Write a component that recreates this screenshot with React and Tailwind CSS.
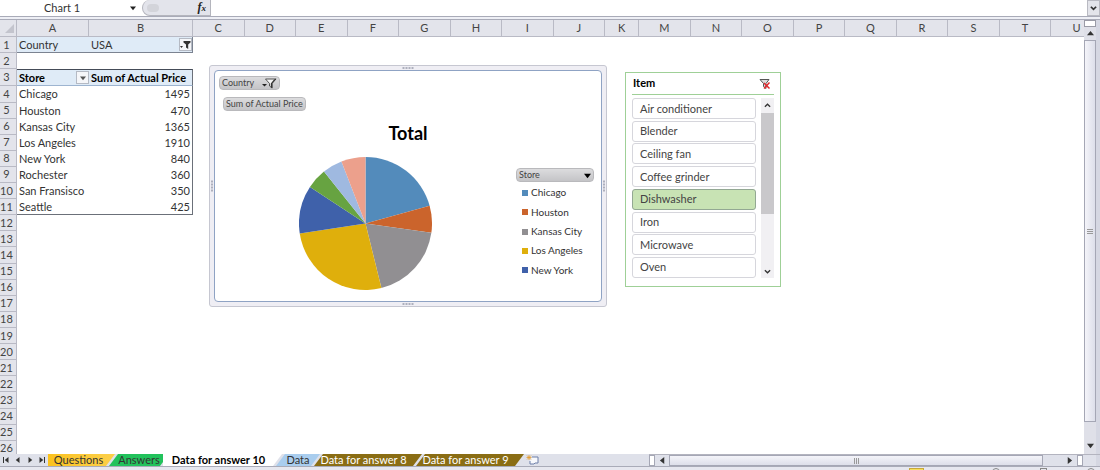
import React, { useState } from 'react';

const columns = ['C', 'D', 'E', 'F', 'G', 'H', 'I', 'J', 'K', 'M', 'N', 'O', 'P', 'Q', 'R', 'S', 'T', 'U'];

const stores = [
  { name: 'Chicago', total: 1495, color: '#538bbb' },
  { name: 'Houston', total: 470, color: '#cb642c' },
  { name: 'Kansas City', total: 1365, color: '#918f92' },
  { name: 'Los Angeles', total: 1910, color: '#dfaf0c' },
  { name: 'New York', total: 840, color: '#3f61aa' },
  { name: 'Rochester', total: 360, color: '#67a341' },
  { name: 'San Fransisco', total: 350, color: '#9fb9e0' },
  { name: 'Seattle', total: 425, color: '#eca08c' },
];

const items = ['Air conditioner', 'Blender', 'Ceiling fan', 'Coffee grinder', 'Dishwasher', 'Iron', 'Microwave', 'Oven'];

const rows = Array.from({ length: 26 }, (_, i) => i + 1);

function Triangle({ className, direction }) {
  const points = {
    down: '0,2 8,2 4,7',
    up: '0,6 8,6 4,1',
    left: '6,0 6,8 1,4',
    right: '2,0 2,8 7,4',
  };
  return (
    <svg viewBox="0 0 8 8" className={className} fill="currentColor" aria-hidden="true">
      <polygon points={points[direction]} />
    </svg>
  );
}

function Funnel({ className }) {
  return (
    <svg viewBox="0 0 15 11" className={className} aria-hidden="true">
      <path d="M0 6h5l-2.500 2.500z" fill="#222" />
      <path d="M3.500 1h10.500l-4 4.500v4.500l-2.500-2V5.500z" fill="#f4f4f4" stroke="#444" strokeWidth="0.900" />
      <path d="M14.500 0.600l-4.200 5v4.900L8.800 9V5.500L12 1.500z" fill="#333" />
    </svg>
  );
}

function SmallFunnel() {
  return (
    <svg viewBox="0 0 11 9" className="h-[9px] w-[11px]" fill="#333" aria-hidden="true">
      <path d="M0 6h3l-1.500 2z" />
      <path d="M3.500 1h7v1.500L8.200 4.500V9L6 7.500V4.500L3.500 2.500z" />
    </svg>
  );
}

function FormulaBar() {
  return (
    <div className="flex h-4 shrink-0 bg-white">
      <div className="flex w-[142px] items-center">
        <input
          aria-label="Name Box"
          defaultValue="Chart 1"
          className="w-[124px] bg-transparent text-center text-[11px] leading-4 text-[#333] outline-none"
        />
        <button aria-label="Open name list" className="flex w-5 justify-center text-[#222]">
          <Triangle direction="down" className="size-[6px]" />
        </button>
      </div>
      <div className="flex w-[69px] items-center justify-between rounded-l-full border-r border-b border-l border-[#b4b5bd] bg-[#e3e4eb] pr-1">
        <span className="ml-1 h-2 w-3 rounded-full bg-[#d3d4da]" />
        <button
          aria-label="Insert function"
          className="font-['Liberation_Serif',serif] text-[12px] leading-4 font-bold text-[#222] italic"
        >
          f<span className="text-[9px]">x</span>
        </button>
      </div>
      <input aria-label="Formula" className="min-w-0 flex-1 bg-white outline-none" />
      <button
        aria-label="Expand formula bar"
        className="flex w-[13px] items-center justify-center border border-[#b9bac2] bg-[#e3e4ea] text-[#333]"
      >
        <svg viewBox="0 0 8 8" className="size-[7px]" fill="none" stroke="currentColor" strokeWidth="2">
          <path d="M1 2l3 3 3-3" />
        </svg>
      </button>
    </div>
  );
}

function CellContent({ row }) {
  const store = stores[row - 4];

  if (row === 1) {
    return (
      <>
        <td className="border-b border-[#7b8391] bg-[#dfebf7] p-0 pl-[2px]">Country</td>
        <td className="border-r border-b border-[#7b8391] bg-[#dfebf7] p-0 pl-[2px]">
          <div className="flex items-center justify-between">
            USA
            <button aria-label="Filter country" className="flex h-[13px] w-[13px] items-center justify-center border border-[#b5bac4] bg-[#f5f6f9]">
              <SmallFunnel />
            </button>
          </div>
        </td>
      </>
    );
  }
  if (row === 3) {
    return (
      <>
        <th scope="col" className="border-t border-b border-t-[#444b57] border-b-[#9db4d0] bg-[#dfebf7] p-0 pl-[2px] text-left text-black">
          <div className="flex items-center justify-between">
            Store
            <button aria-label="Filter store" className="flex h-[13px] w-[13px] items-center justify-center border border-[#b5bac4] bg-[#f5f6f9] text-[#555]">
              <Triangle direction="down" className="size-[6px]" />
            </button>
          </div>
        </th>
        <th scope="col" className="border-t border-r border-b border-t-[#444b57] border-r-[#6b7079] border-b-[#9db4d0] bg-[#dfebf7] p-0 pl-[2px] text-left text-black">
          Sum of Actual Price
        </th>
      </>
    );
  }
  if (store && row < 11) {
    return (
      <>
        <td className="p-0 pl-[2px]">{store.name}</td>
        <td className="border-r border-[#6b7079] p-0 pr-[2px] text-right">{store.total}</td>
      </>
    );
  }
  if (store) {
    return (
      <>
        <td className="border-b border-[#6b7079] p-0 pl-[2px]">{store.name}</td>
        <td className="border-r border-b border-[#6b7079] p-0 pr-[2px] text-right">{store.total}</td>
      </>
    );
  }
  return (
    <>
      <td />
      <td />
    </>
  );
}

function Grid() {
  const head = 'border-r border-b border-[#b9bac5] bg-[#e3e4eb] p-0 text-center font-normal text-[#444]';

  return (
    <table className="h-[437px] w-[1103px] table-fixed border-separate border-spacing-0 text-[11px] leading-[14px] whitespace-nowrap text-[#333]">
      <colgroup>
        <col className="w-[17px]" />
        <col className="w-[72px]" />
        <col className="w-[104px]" />
        {columns.map((name) => (
          <col key={name} className={name === 'K' ? 'w-[34px]' : ''} />
        ))}
      </colgroup>
      <thead>
        <tr className="h-[17px]">
          <th className={head} aria-label="Select all">
            <svg viewBox="0 0 8 8" className="mr-[2px] ml-auto size-[9px]" fill="#c3c4cd">
              <polygon points="8,0 8,8 0,8" />
            </svg>
          </th>
          <th className={head}>A</th>
          <th className={head}>B</th>
          {columns.map((name) => (
            <th key={name} className={head}>{name}</th>
          ))}
        </tr>
      </thead>
      <tbody>
        {rows.map((row) => (
          <tr key={row}>
            <th scope="row" className={`${head} pr-[3px]`}>
              {row}
            </th>
            <CellContent row={row} />
            <td colSpan={columns.length} />
          </tr>
        ))}
      </tbody>
    </table>
  );
}

function Pie() {
  const sum = stores.reduce((acc, store) => acc + store.total, 0);
  let start = 0;

  const point = (share) => {
    const angle = share * Math.PI * 2;
    return `${100 + 100 * Math.sin(angle)} ${100 - 100 * Math.cos(angle)}`;
  };

  return (
    <svg viewBox="0 0 200 200" className="size-[133px]" role="img" aria-label="Total by store">
      {stores.map((store) => {
        const from = start;
        start += store.total / sum;
        return (
          <path key={store.name} d={`M100 100L${point(from)}A100 100 0 0 1 ${point(start)}Z`} fill={store.color} />
        );
      })}
    </svg>
  );
}

function Grip({ className }) {
  return (
    <span className={className}>
      <i className="size-[2px] bg-[#aeb0bd]" />
      <i className="size-[2px] bg-[#aeb0bd]" />
      <i className="size-[2px] bg-[#aeb0bd]" />
      <i className="size-[2px] bg-[#aeb0bd]" />
    </span>
  );
}

function PivotChart() {
  const pill = 'flex items-center rounded border border-[#b9b9bc] bg-linear-to-b from-[#dcdcde] to-[#c4c4c7] text-[9px] leading-3 text-[#444]';

  return (
    <section
      aria-label="Chart 1"
      className="absolute top-[45px] left-[209px] flex h-[242px] w-[398px] rounded-[3px] border border-[#c6c7d1] bg-[#efeef4] p-[4px]"
    >
      <Grip className="absolute top-px left-1/2 flex -translate-x-1/2 gap-px" />
      <Grip className="absolute bottom-px left-1/2 flex -translate-x-1/2 gap-px" />
      <Grip className="absolute top-1/2 left-px flex -translate-y-1/2 flex-col gap-px" />
      <Grip className="absolute top-1/2 right-px flex -translate-y-1/2 flex-col gap-px" />
      <div className="flex flex-1 flex-col rounded-sm border border-[#8fa3c4] bg-white">
        <div className="flex flex-col items-start gap-[7px] pt-[5px] pl-[4px]">
          <button className={`${pill} h-[14px] w-[61px] justify-between px-[2px]`}>
            Country
            <Funnel className="h-[11px] w-[15px]" />
          </button>
          <button className={`${pill} ml-[4px] h-[14px] px-[2px]`}>Sum of Actual Price</button>
        </div>
        <h2 className="mt-[10px] text-center text-[18px] leading-6 font-bold text-black">Total</h2>
        <div className="flex justify-between pt-[12px] pr-[7px] pl-[84px]">
          <Pie />
          <div className="w-[78px] pt-[11px]">
            <button className={`${pill} h-[14px] w-full justify-between px-[2px]`}>
              Store
              <Triangle direction="down" className="size-[7px] text-black" />
            </button>
            <ul className="mt-px flex h-[97px] flex-col text-[10px] text-[#333]">
              {stores.slice(0, 5).map((store) => (
                <li key={store.name} className="flex flex-1 items-center gap-[3px] pl-[6px] whitespace-nowrap">
                  <span className="size-[6px]" style={{ backgroundColor: store.color }} />
                  {store.name}
                </li>
              ))}
            </ul>
          </div>
        </div>
      </div>
    </section>
  );
}

function Slicer() {
  const [selected, setSelected] = useState('Dishwasher');

  return (
    <section
      aria-label="Item"
      className="absolute top-[52px] left-[625px] flex h-[215px] w-[156px] flex-col border border-[#9fd097] bg-white px-[6px]"
    >
      <div className="flex h-[22px] items-center justify-between border-b border-[#9fd097] pr-[3px] pl-px text-[11px] font-bold text-black">
        Item
        <button aria-label="Clear filter">
          <svg viewBox="0 0 12 12" className="size-[12px]" fill="none">
            <path d="M1 1.500h9L7 5.500v5L4.500 8.500v-3z" fill="#ddd" stroke="#555" />
            <path d="M5 5l5.500 5.500M10.500 4.500L5 10.500" stroke="#e0282e" strokeWidth="1.500" />
          </svg>
        </button>
      </div>
      <div className="mt-[3px] flex h-[180px] gap-[5px]">
        <div className="flex flex-1 flex-col justify-between">
          {items.map((item) => (
            <button
              key={item}
              aria-pressed={item === selected}
              onClick={() => setSelected(item)}
              className={`h-[21px] rounded-[3px] border pl-[7px] text-left text-[11px] leading-4 text-[#444] ${
                item === selected ? 'border-[#93a893] bg-[#c8e3b4]' : 'border-[#d6d6dc] bg-white'
              }`}
            >
              {item}
            </button>
          ))}
        </div>
        <div className="flex w-[13px] flex-col items-center bg-[#f1f0f3] text-[#333]">
          <svg viewBox="0 0 8 8" className="my-[4px] size-[7px]" fill="none" stroke="currentColor" strokeWidth="1.500">
            <path d="M1 5.500l3-3 3 3" />
          </svg>
          <div className="h-[101px] w-full bg-[#c9c8cb]" />
          <svg viewBox="0 0 8 8" className="mt-auto mb-[3px] size-[7px]" fill="none" stroke="currentColor" strokeWidth="1.500">
            <path d="M1 2.500l3 3 3-3" />
          </svg>
        </div>
      </div>
    </section>
  );
}

function VerticalScroll() {
  return (
    <div className="flex w-[16px] shrink-0 border-r-4 border-[#d5d7e2] bg-[#dfe0e8]">
      <div className="flex flex-1 flex-col items-center text-[#333]">
        <div className="h-[7px] w-full border border-[#9a9ba6] bg-white" />
        <Triangle direction="up" className="my-[3px] size-[7px]" />
        <div className="flex w-full flex-1 flex-col items-center justify-center gap-px border border-[#a5a7b5] bg-linear-to-r from-[#f4f4f9] to-[#dddfea]">
          <i className="h-px w-[6px] bg-[#999]" />
          <i className="h-px w-[6px] bg-[#999]" />
          <i className="h-px w-[6px] bg-[#999]" />
        </div>
        <Triangle direction="down" className="mt-[20px] mb-[5px] size-[7px]" />
      </div>
    </div>
  );
}

function SheetTabs() {
  const slant = '-ml-[6px] h-full [clip-path:polygon(9px_0,100%_0,calc(100%-9px)_100%,0_100%)]';

  return (
    <div className="flex h-3 shrink-0 bg-[#dfe1ea] text-[11px] leading-3 whitespace-nowrap text-[#333]">
      <div className="flex w-[48px] items-center justify-around">
        <button aria-label="First sheet" className="flex items-center">
          <i className="h-[6px] w-px bg-[#333]" />
          <Triangle direction="left" className="size-[6px]" />
        </button>
        <button aria-label="Previous sheet">
          <Triangle direction="left" className="size-[6px]" />
        </button>
        <button aria-label="Next sheet">
          <Triangle direction="right" className="size-[6px]" />
        </button>
        <button aria-label="Last sheet" className="flex items-center">
          <Triangle direction="right" className="size-[6px]" />
          <i className="h-[6px] w-px bg-[#333]" />
        </button>
      </div>
      <div className="flex" role="tablist">
        <button role="tab" className="h-full w-[67px] bg-linear-to-r from-[#fbc21c] to-[#fcd04a] pr-[6px] text-center [clip-path:polygon(0_0,100%_0,calc(100%-9px)_100%,0_100%)]">
          Questions
        </button>
        <button role="tab" className={`${slant} w-[60px] bg-[#22c25c]`}>Answers</button>
        <button role="tab" aria-selected="true" className="-ml-[6px] h-full w-[119px] bg-white pr-[8px] font-bold text-black [clip-path:polygon(0_0,100%_0,calc(100%-9px)_100%,0_100%)]">
          Data for answer 10
        </button>
        <button role="tab" className={`${slant} w-[44px] bg-[#a9cdee]`}>Data</button>
        <button role="tab" className={`${slant} w-[108px] bg-[#8a6d14] pr-[9px] text-white`}>Data for answer 8</button>
        <button role="tab" className={`${slant} w-[108px] bg-[#8a6d14] pr-[9px] text-white`}>Data for answer 9</button>
        <button aria-label="Insert worksheet" className="ml-[2px]">
          <svg viewBox="0 0 14 12" className="h-3 w-[14px]" fill="none">
            <path d="M6 3h6v6H9l-1 1H4V7" fill="#f7f8fc" stroke="#6c7fa8" />
            <path d="M3 1v5M0.500 3.500h5M1 1.500l4 4M5 1.500l-4 4" stroke="#e39a2d" strokeWidth="0.800" />
          </svg>
        </button>
      </div>
      <div className="ml-auto flex w-[451px] border-t border-[#b3b4bf]">
        <div className="w-[6px] border border-[#a5a7b5] bg-white" />
        <button aria-label="Scroll left" className="flex w-[14px] items-center justify-center">
          <Triangle direction="left" className="size-[7px]" />
        </button>
        <div className="flex flex-1 items-center justify-center gap-px border border-[#a5a7b5] bg-linear-to-b from-[#f4f4f9] to-[#dddfea]">
          <i className="h-[6px] w-px bg-[#999]" />
          <i className="h-[6px] w-px bg-[#999]" />
          <i className="h-[6px] w-px bg-[#999]" />
        </div>
        <button aria-label="Scroll right" className="flex w-[34px] items-center justify-end pr-[4px]">
          <Triangle direction="right" className="size-[7px]" />
        </button>
        <div className="w-[6px] border border-[#a5a7b5] bg-white" />
        <div className="w-[13px]" />
        <div className="w-[4px] bg-[#d5d7e2]" />
      </div>
    </div>
  );
}

function StatusBar() {
  return (
    <div className="flex h-1 shrink-0 justify-end overflow-hidden border-t border-[#a9abb8] bg-[#e6e7ef] pt-px">
      <span className="mr-[68px] h-2 w-[15px] border border-[#c9a93a] bg-[#f6df5a]" />
      <span className="mr-[40px] size-[8px] rounded-full border border-[#888]" />
      <span className="mr-[40px] h-2 w-[7px] border border-[#888]" />
      <span className="mr-[5px] size-[8px] rounded-full border border-[#888]" />
    </div>
  );
}

export default function App() {
  return (
    <div className="flex h-screen flex-col overflow-hidden bg-white font-[Lato,sans-serif]">
      <FormulaBar />
      <div className="h-1 shrink-0 border-t border-b border-[#a9abb8] bg-[#eeeff5]" />
      <div className="flex min-h-0 flex-1">
        <main className="relative min-w-0 flex-1 overflow-hidden">
          <Grid />
          <PivotChart />
          <Slicer />
        </main>
        <VerticalScroll />
      </div>
      <SheetTabs />
      <StatusBar />
    </div>
  );
}
